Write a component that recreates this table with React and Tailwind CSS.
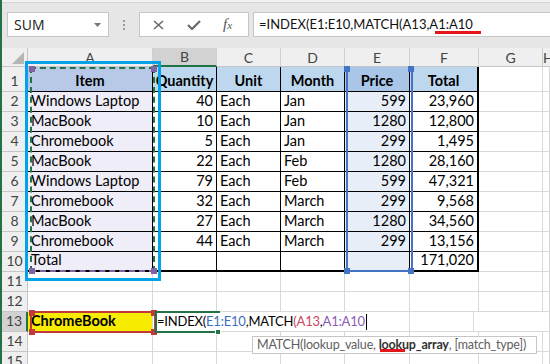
import React from 'react';

const rows = [
  ['Windows Laptop', '40', 'Each', 'Jan', '599', '23,960'],
  ['MacBook', '10', 'Each', 'Jan', '1280', '12,800'],
  ['Chromebook', '5', 'Each', 'Jan', '299', '1,495'],
  ['MacBook', '22', 'Each', 'Feb', '1280', '28,160'],
  ['Windows Laptop', '79', 'Each', 'Feb', '599', '47,321'],
  ['Chromebook', '32', 'Each', 'March', '299', '9,568'],
  ['MacBook', '27', 'Each', 'March', '1280', '34,560'],
  ['Chromebook', '44', 'Each', 'March', '299', '13,156'],
  ['Total', '', '', '', '', '171,020'],
];

const base = 'flex items-end pb-[1px] px-[3px] leading-[18px] whitespace-nowrap overflow-hidden';
const cell = `${base} text-[14.5px]`;
const grid = 'border-r border-b border-[#d9d9d9]';
const dark = 'border-r border-b border-black';

function RowHead({ n, active }) {
  return (
    <div
      className={`w-[26px] shrink-0 flex items-end justify-center pb-[1px] text-[14px] leading-[18px] text-[#444] border-b ${
        active ? 'bg-[#d2d2d2] border-r-2 border-r-[#217346] border-b-[#c6c6c6]' : 'bg-[#efefef] border-r border-[#c6c6c6]'
      }`}
    >
      {n}
    </div>
  );
}

function Squares({ color, corners }) {
  return corners.map(([x, y], i) => (
    <div key={i} className={`absolute w-[6px] h-[6px] ${color}`} style={{ left: x, top: y }} />
  ));
}

export default function App() {
  const cols = ['A', 'B', 'C', 'D', 'E', 'F', 'G', 'H'];
  const colW = ['w-[125px]', 'w-[64px]', 'w-[64px]', 'w-[64px]', 'w-[65px]', 'w-[69px]', 'w-[64px]', 'flex-1'];

  return (
    <div className="relative w-[550px] h-[364px] overflow-hidden bg-white border-l-2 border-[#217346] font-['Lato',sans-serif] text-black">
      {/* formula bar */}
      <div className="h-[48px] bg-[#e6e6e6] flex flex-col">
        <div className="h-[3px] bg-[#f2f2f2] border-b border-[#d6d6d6]" />
        <div className="flex items-center mt-[9px] h-[25px]">
          <div className="ml-[5px] w-[102px] h-full bg-white border border-[#c6c6c6] flex items-center justify-between pl-[6px] pr-[7px]">
            <span className="font-['Open_Sans',sans-serif] text-[14px] text-[#222]">SUM</span>
            <svg width="7" height="4" viewBox="0 0 7 4"><path d="M0 0h7L3.5 4z" fill="#767676" /></svg>
          </div>
          <div className="w-[30px] flex flex-col items-center gap-[2px]">
            <span className="w-[2px] h-[2px] bg-[#9a9a9a]" />
            <span className="w-[2px] h-[2px] bg-[#9a9a9a]" />
            <span className="w-[2px] h-[2px] bg-[#9a9a9a]" />
          </div>
          <div className="w-[110px] h-full bg-white border border-[#c6c6c6] flex items-center">
            <svg className="ml-[13px]" width="11" height="10" viewBox="0 0 11 10">
              <path d="M1 1l9 8M10 1l-9 8" stroke="#6a6a6a" strokeWidth="1.6" />
            </svg>
            <svg className="ml-[23px]" width="14" height="10" viewBox="0 0 14 10">
              <path d="M1 5l4 4 8-8" stroke="#6a6a6a" strokeWidth="2.2" fill="none" />
            </svg>
            <span className="ml-[22px] font-['Liberation_Serif',serif] italic text-[15px] text-[#555] leading-none">
              f<span className="text-[11px]">x</span>
            </span>
          </div>
          <div className="ml-[4px] flex-1 h-full bg-white border border-r-0 border-[#c6c6c6] flex items-center pl-[5px] text-[13px] text-[#111] whitespace-nowrap">
            =INDEX(E1:E10,MATCH(A13,A1:A10
          </div>
        </div>
      </div>

      {/* column headers */}
      <div className="flex h-[19px]">
        <div className="w-[26px] shrink-0 bg-[#efefef] border-r border-b border-[#c6c6c6] relative">
          <svg className="absolute left-[10px] top-[4px]" width="12" height="12" viewBox="0 0 12 12"><path d="M12 0v12H0z" fill="#b5b5b5" /></svg>
        </div>
        {cols.map((c, i) => (
          <div
            key={c}
            className={`${colW[i]} shrink-0 flex items-center justify-center text-[14px] text-[#444] border-r border-[#cfcfcf] ${
              c === 'B' ? 'bg-[#d2d2d2] border-b-2 border-b-[#217346]' : 'bg-[#efefef] border-b border-b-[#c6c6c6]'
            }`}
          >
            {c}
          </div>
        ))}
      </div>

      {/* row 1 headers */}
      <div className="flex h-[25px]">
        <RowHead n={1} />
        <div className={`${colW[0]} ${cell} ${dark} justify-center font-bold bg-[#b8c9e8]`}>Item</div>
        <div className={`${colW[1]} ${cell} ${dark} justify-center font-bold bg-[#bdd7ee]`}>Quantity</div>
        <div className={`${colW[2]} ${cell} ${dark} justify-center font-bold bg-[#bdd7ee]`}>Unit</div>
        <div className={`${colW[3]} ${cell} ${dark} justify-center font-bold bg-[#bdd7ee]`}>Month</div>
        <div className={`${colW[4]} ${cell} ${dark} justify-center font-bold bg-[#a9c6e8]`}>Price</div>
        <div className={`${colW[5]} ${cell} border-r-2 border-b border-black justify-center font-bold bg-[#bdd7ee]`}>Total</div>
        <div className={`${colW[6]} ${grid}`} />
        <div className={`${colW[7]} ${grid}`} />
      </div>

      {rows.map((r, i) => {
        const last = i === rows.length - 1;
        const bb = last ? 'border-b-2' : 'border-b';
        return (
          <div key={i} className="flex h-[20px]">
            <RowHead n={i + 2} />
            <div className={`${colW[0]} ${cell} border-r ${bb} border-black bg-[#efedf7]`}>{r[0]}</div>
            <div className={`${colW[1]} ${cell} border-r ${bb} border-black justify-end`}>{r[1]}</div>
            <div className={`${colW[2]} ${cell} border-r ${bb} border-black`}>{r[2]}</div>
            <div className={`${colW[3]} ${cell} border-r ${bb} border-black`}>{r[3]}</div>
            <div className={`${colW[4]} ${cell} border-r ${bb} border-black justify-end bg-[#e8eef8]`}>{r[4]}</div>
            <div className={`${colW[5]} ${cell} border-r-2 ${bb} border-black justify-end`}>{r[5]}</div>
            <div className={`${colW[6]} ${grid}`} />
            <div className={`${colW[7]} ${grid}`} />
          </div>
        );
      })}

      {[11, 12, 13, 14, 15].map((n) => (
        <div key={n} className="flex h-[20px]">
          <RowHead n={n} active={n === 13} />
          {n === 13 ? (
            <>
              <div className={`${colW[0]} ${cell} ${grid} font-bold bg-[#f7eb00]`}>ChromeBook</div>
              <div className={`w-[257px] ${base} ${grid} pl-[4px] text-[13px] tracking-[-0.2px]`}>
                =INDEX(<span className="text-[#3c6fc2]">E1:E10</span>,MATCH<span className="text-[#d0455a]">(A13</span>,
                <span className="text-[#8a5bb8]">A1:A10</span>
                <span className="inline-block w-px h-[16px] bg-black ml-[1px]" />
              </div>
            </>
          ) : (
            cols.slice(0, 6).map((c, i) => <div key={c} className={`${colW[i]} ${grid}`} />)
          )}
          <div className={`${colW[6]} ${grid}`} />
          <div className={`${colW[7]} ${grid}`} />
        </div>
      ))}

      {/* overlays */}
      <div className="absolute left-[433px] top-[31px] w-[46px] h-[3px] bg-[#e3171b]" />

      {/* A1:A10 reference + marquee */}
      <div className="absolute left-[28px] top-[67px] w-[125px] h-[205px] border-2 border-dashed border-[#217346] border-b-[#8064a2]" />
      <Squares color="bg-[#8064a2]" corners={[[27, 66], [149, 66], [27, 268], [149, 268]]} />

      {/* E1:E10 reference */}
      <div className="absolute left-[344px] top-[67px] w-[67px] h-[205px] border-l-2 border-r-2 border-b-2 border-[#4472c4]" />
      <Squares color="bg-[#4472c4]" corners={[[342, 66], [406, 66], [342, 268], [406, 268]]} />

      {/* annotation box */}
      <div className="absolute left-[23px] top-[61px] w-[136px] h-[220px] border-[3px] border-[#00a2e8]" />

      {/* A13 reference */}
      <div className="absolute left-[28px] top-[311px] w-[126px] h-[22px] border-2 border-[#c0393b]" />
      <Squares color="bg-[#c0393b]" corners={[[27, 310], [149, 310], [27, 329], [149, 329]]} />

      {/* active cell B13 */}
      <div className="absolute left-[153px] top-[311px] w-[65px] h-[22px] border-l-2 border-t-2 border-b-2 border-[#217346]" />
      <div className="absolute left-[213px] top-[329px] w-[6px] h-[6px] bg-[#217346] border border-white" />

      {/* function tooltip */}
      <div className="absolute left-[250px] top-[336px] w-[285px] h-[18px] bg-white border border-[#c6c6c6] flex items-center pl-[4px] text-[12.5px] tracking-[-0.2px] text-[#5e5e5e] whitespace-nowrap">
        MATCH(lookup_value,&nbsp;<b className="font-bold text-[#333]">lookup_array</b>, [match_type])
      </div>
      <div className="absolute left-[378px] top-[349px] w-[25px] h-[3px] bg-[#e3171b]" />
    </div>
  );
}
